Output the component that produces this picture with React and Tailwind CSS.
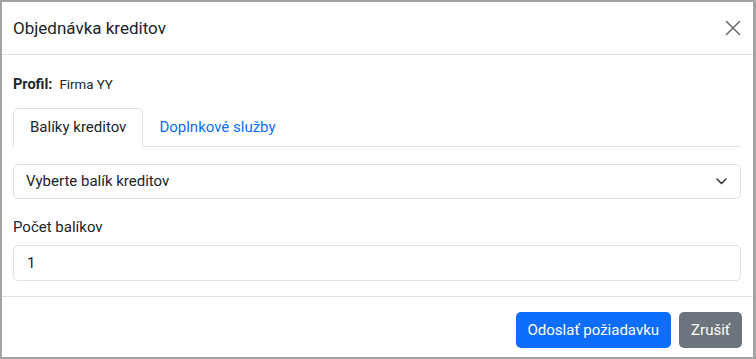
export default function App() {
  const font = { fontFamily: "Roboto, 'Noto Sans', sans-serif" };
  return (
    <div
      className="w-[756px] h-[359px] bg-white border-l-2 border-t-2 border-r-[3px] border-b-2 border-[#a3a3a3] flex flex-col text-[#212529]"
      style={font}
    >
      {/* header */}
      <div className="h-[53px] shrink-0 border-b border-[#dee2e6] flex items-center justify-between pl-[11px] pr-[12px]">
        <h5 className="text-[17px] leading-[24px]">Objednávka kreditov</h5>
        <button className="w-[16px] h-[16px] flex items-center justify-center text-[#6e6e6e]">
          <svg width="16" height="16" viewBox="0 0 16 16" fill="none" stroke="currentColor" strokeWidth="1.6" strokeLinecap="round">
            <path d="M1.5 1.5l13 13M14.5 1.5l-13 13" />
          </svg>
        </button>
      </div>

      {/* body */}
      <div className="shrink-0 pl-[11px] pr-[12px] pt-[20px] pb-[15px] border-b border-[#dee2e6]">
        <div className="flex items-baseline h-[20px] leading-[20px]">
          <span className="font-bold text-[14.5px]">Profil:</span>
          <span className="ml-[7px] text-[13.3px]">Firma YY</span>
        </div>

        <div className="mt-[13px] flex border-b border-[#dee2e6] text-[15px]">
          <div className="-mb-px h-[39px] px-[16px] flex items-center border border-[#dee2e6] border-b-white rounded-t-[5px] bg-white">
            Balíky kreditov
          </div>
          <div className="-mb-px h-[39px] px-[16px] flex items-center text-[#0d6efd]">
            Doplnkové služby
          </div>
        </div>

        <div className="mt-[17px] h-[35px] border border-[#dee2e6] rounded-[5px] flex items-center justify-between pl-[12px] pr-[13px] text-[15px]">
          <span>Vyberte balík kreditov</span>
          <svg width="11" height="7" viewBox="0 0 11 7" fill="none" stroke="#343a40" strokeWidth="1.6" strokeLinecap="round" strokeLinejoin="round">
            <path d="M1 1l4.5 4.5L10 1" />
          </svg>
        </div>

        <div className="mt-[18px] h-[20px] leading-[20px] text-[15px]">Počet balíkov</div>

        <div className="mt-[8px] h-[36px] border border-[#dee2e6] rounded-[5px] flex items-center pl-[13px] text-[15px]">
          1
        </div>
      </div>

      {/* footer */}
      <div className="pt-[15px] pl-[11px] pr-[11px] flex justify-end gap-[8px] text-[15px]">
        <button className="h-[36px] px-[12px] rounded-[5px] bg-[#0d6efd] text-white">Odoslať požiadavku</button>
        <button className="h-[36px] px-[12px] rounded-[5px] bg-[#6c757d] text-white">Zrušiť</button>
      </div>
    </div>
  );
}
